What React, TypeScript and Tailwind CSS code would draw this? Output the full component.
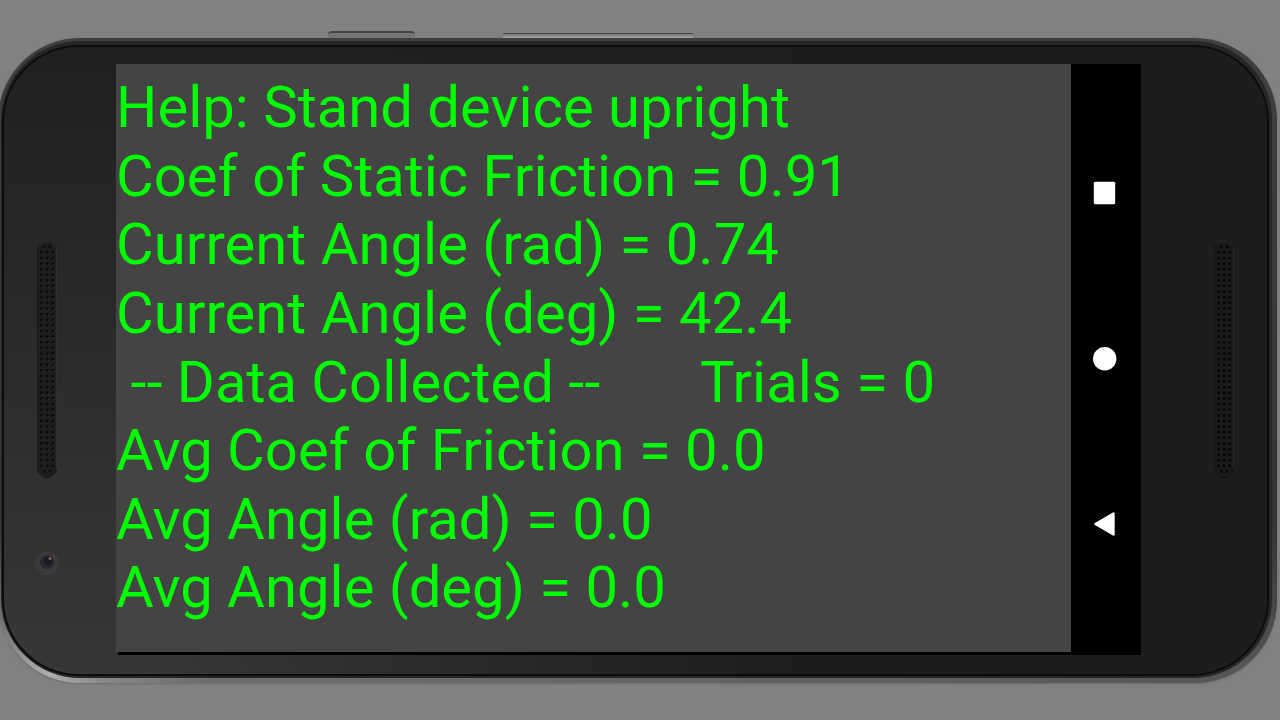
import React from "react";

const readings: string[] = [
  "Help: Stand device upright",
  "Coef of Static Friction = 0.91",
  "Current Angle (rad) = 0.74",
  "Current Angle (deg) = 42.4",
  " -- Data Collected --       Trials = 0",
  "Avg Coef of Friction = 0.0",
  "Avg Angle (rad) = 0.0",
  "Avg Angle (deg) = 0.0",
];

function Speaker({ light }: { light?: boolean }) {
  const rows = Array.from({ length: 39 }, (_, i) => 12.4 + i * 5.62);
  const hole = light ? "#0b0b0b" : "#050505";
  return (
    <svg width="20" height="238" viewBox="0 0 20 238" aria-hidden="true">
      <rect x="0.5" y="0.5" width="19" height="237" rx="9.5" fill={light ? "#1e1e1e" : "#191919"} stroke={light ? "#1a1a1a" : "#141414"} />
      <path d="M3 5C6 -0.8 14 -0.8 17 5C18.6 7 19.4 8 19.4 11V228" fill="none" stroke={light ? "#3a3a3a" : "#343434"} strokeWidth="0.8" />
      {[7.5, 13].map((x) => (
        <g key={x}>
          <circle cx={x} cy="6.8" r="1.4" fill={hole} />
          <circle cx={x} cy="231.4" r="1.4" fill={hole} />
        </g>
      ))}
      {rows.map((y) =>
        [4.6, 10.2, 15.8].map((x) => (
          <g key={`${x}-${y}`}>
            <circle cx={x} cy={y} r="1.4" fill={hole} />
            {light && <circle cx={x + 1} cy={y + 1} r="0.5" fill="#3c3c3c" />}
          </g>
        )),
      )}
    </svg>
  );
}

function Camera() {
  return (
    <svg width="26" height="26" viewBox="0 0 26 26" aria-hidden="true">
      <circle cx="13" cy="13" r="12" fill="#3a3a3b" />
      <circle cx="13" cy="12" r="7" fill="#28262e" />
      <circle cx="14" cy="11" r="4" fill="#1c1924" />
      <circle cx="16" cy="8.5" r="1.6" fill="#8a6066" />
    </svg>
  );
}

function NavBar() {
  return (
    <nav aria-label="System" className="flex w-[70px] shrink-0 flex-col items-center justify-between bg-black pt-[117px] pr-[2px] pb-[119px]">
      <button aria-label="Recent apps">
        <svg className="block" width="24" height="24" viewBox="0 0 24 24">
          <rect x="0.8" y="0.8" width="21.4" height="22.4" rx="1.5" fill="#fff" />
        </svg>
      </button>
      <button aria-label="Home">
        <svg className="block" width="24" height="24" viewBox="0 0 24 24">
          <circle cx="11.7" cy="11.7" r="11.7" fill="#fff" />
        </svg>
      </button>
      <button aria-label="Back">
        <svg className="block" width="24" height="24" viewBox="0 0 24 24">
          <path d="M2.5 12L20.5 1.5V22.5Z" fill="#fff" stroke="#fff" strokeWidth="2.4" strokeLinejoin="round" />
        </svg>
      </button>
    </nav>
  );
}

export default function App() {
  return (
    <div className="min-h-screen overflow-hidden bg-[#818181] pb-[36px]">
      <div className="flex h-[38px] items-end pl-[328px]" aria-hidden="true">
        <div className="h-[7px] w-[87px] rounded-t-sm border-t-2 border-[#464446] bg-[#767476]" />
        <div className="ml-[88px] h-[5px] w-[190px] border-t border-[#484848] bg-gradient-to-b from-[#777777] to-[#a6a6a6]" />
      </div>
      <div className="-ml-[2px] mr-[3px] rounded-[82px] bg-[linear-gradient(to_bottom,#403e40_0%,#353335_75%,transparent_97%),linear-gradient(to_right,#8a888a_0%,#aeacae_4%,#8a888a_8%,#6e6c6e_16%,#625f62_70%,#555355_100%)] pt-[3px] pr-[5px] pb-[5px] pl-[3px] shadow-[0_1px_2px_#6f6d6f]">
        <div className="rounded-[79px] bg-[#262626] pt-[4px] pr-[3px] pb-[2px] pl-px">
          <div className="rounded-[77px] border-2 border-[#0c0c0c] bg-[linear-gradient(to_right,transparent_12%,#1d1d1e_62%),linear-gradient(to_bottom,#202020,#29292a_40%,#373738)]">
            <div className="flex pt-[17px] pb-[19px]">
              <div className="flex w-[112px] shrink-0 flex-col pl-[33px] pt-[176px]">
                <Speaker light />
                <div className="-ml-[3px] mt-[72px]">
                  <Camera />
                </div>
              </div>
              <div className="flex min-w-0 flex-1">
                <main className="flex min-w-0 flex-1 flex-col bg-black">
                  <div className="grid min-h-[588px] flex-1 auto-rows-fr bg-[#444444] pt-[9px] pb-[30px] font-['Roboto',sans-serif] text-[58px] leading-[68px] whitespace-pre text-[#00ff00]">
                    {readings.map((line) => (
                      <p key={line}>{line}</p>
                    ))}
                  </div>
                  <div className="h-[3px] shrink-0 border-l-2 border-[#343434] bg-black" />
                </main>
                <NavBar />
              </div>
              <div className="w-[126px] shrink-0 pl-[73px] pt-[176px]">
                <Speaker />
              </div>
            </div>
          </div>
        </div>
      </div>
    </div>
  );
}
